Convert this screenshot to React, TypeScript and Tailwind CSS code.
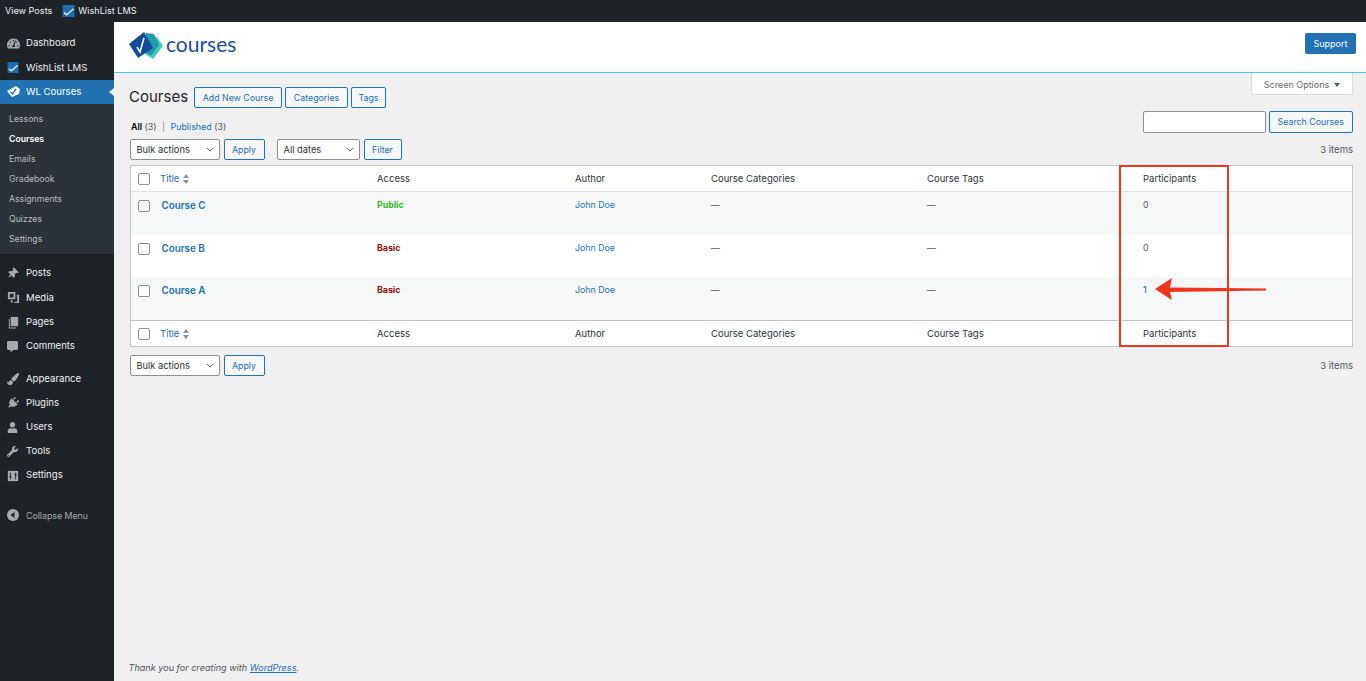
// App.tsx - WL Courses admin list
import type { ReactNode } from 'react';
import { FaTachometerAlt, FaThumbtack, FaCommentAlt, FaPaintBrush, FaPlug, FaUser, FaWrench } from 'react-icons/fa';

const font = 'font-[Inter,"Liberation_Sans",sans-serif]';

function CheckLogo({ className }: { className: string }) {
  return (
    <svg viewBox="0 0 13 13" className={className}>
      <rect width="13" height="13" fill="#1e6cb0" />
      <path d="M1.5 8l3 2.5L12 4" fill="none" stroke="#dfe8f0" strokeWidth="1.6" />
    </svg>
  );
}

function MediaIcon() {
  return (
    <svg viewBox="0 0 14 14" className="w-[13px] h-[13px]" fill="#a7aaad">
      <path d="M1 1h8v8H1z M3 3v4h4V3z" fillRule="evenodd" />
      <path d="M10.5 4H13v9H8v-1.5h3V6h-.5z" />
      <path d="M4 10h2v2.5H4z" />
    </svg>
  );
}

function PagesIcon() {
  return (
    <svg viewBox="0 0 14 14" className="w-[13px] h-[13px]" fill="#a7aaad">
      <path d="M4 1h8v10H4z" />
      <path d="M2 3h1v9.5h7v1H2z" />
    </svg>
  );
}

function SlidersIcon() {
  return (
    <svg viewBox="0 0 14 14" className="w-[12px] h-[12px]">
      <rect x="1" y="1" width="12" height="12" fill="#a7aaad" />
      <path d="M4 3v8M10 3v8M2.5 8h3M8.5 5.5h3" stroke="#1d2327" strokeWidth="1" />
    </svg>
  );
}

function MenuItem({ icon, label, active }: { icon: ReactNode; label: string; active?: boolean }) {
  return (
    <div className={`relative h-[24.2px] flex items-center text-[9.6px] ${active ? 'bg-[#2271b1] text-white' : 'text-[#f0f0f1]'}`}>
      <span className="w-[26px] pl-[7px] flex items-center text-[#a7aaad] shrink-0">{icon}</span>
      {label}
      {active && (
        <span className="absolute right-0 top-[8px] border-y-[4px] border-r-[5px] border-y-transparent border-r-[#f0f0f1]" />
      )}
    </div>
  );
}

function Sidebar() {
  const sub = ['Lessons', 'Courses', 'Emails', 'Gradebook', 'Assignments', 'Quizzes', 'Settings'];
  return (
    <div className="w-[114px] shrink-0 bg-[#1d2327] pt-[9.5px]">
      <MenuItem icon={<FaTachometerAlt className="w-[13px] h-[13px]" />} label="Dashboard" />
      <MenuItem icon={<CheckLogo className="w-[12px] h-[11px]" />} label="WishList LMS" />
      <MenuItem
        active
        label="WL Courses"
        icon={
          <svg viewBox="0 0 14 12" className="w-[14px] h-[12px]">
            <path d="M0 5L9 0l4 3-1 5-7 3z" fill="#fff" />
            <path d="M3.5 6l2 2 3.5-5" fill="none" stroke="#2271b1" strokeWidth="1.4" />
          </svg>
        }
      />
      <div className="bg-[#2c3338] py-[5px] text-[8.7px]">
        {sub.map((s) => (
          <div key={s} className={`h-[20px] flex items-center pl-[9px] ${s === 'Courses' ? 'text-white font-semibold' : 'text-[#b9bcbf]'}`}>
            {s}
          </div>
        ))}
      </div>
      <div className="mt-[7.5px]">
        <MenuItem icon={<FaThumbtack className="w-[11px] h-[11px] rotate-45" />} label="Posts" />
        <MenuItem icon={<MediaIcon />} label="Media" />
        <MenuItem icon={<PagesIcon />} label="Pages" />
        <MenuItem icon={<FaCommentAlt className="w-[11px] h-[11px]" />} label="Comments" />
      </div>
      <div className="mt-[8.5px]">
        <MenuItem icon={<FaPaintBrush className="w-[12px] h-[12px]" />} label="Appearance" />
        <MenuItem icon={<FaPlug className="w-[12px] h-[12px] rotate-45" />} label="Plugins" />
        <MenuItem icon={<FaUser className="w-[11px] h-[11px]" />} label="Users" />
        <MenuItem icon={<FaWrench className="w-[11px] h-[11px]" />} label="Tools" />
        <MenuItem icon={<SlidersIcon />} label="Settings" />
      </div>
      <div className="mt-[15.5px] h-[24px] flex items-center text-[8.8px] text-[#a7aaad]">
        <span className="w-[26px] pl-[7px] shrink-0">
          <svg viewBox="0 0 12 12" className="w-[12px] h-[12px]">
            <circle cx="6" cy="6" r="6" fill="#a7aaad" />
            <path d="M7.5 3v6L3.5 6z" fill="#1d2327" />
          </svg>
        </span>
        Collapse Menu
      </div>
    </div>
  );
}

function OutlineButton({ children, className = '' }: { children: ReactNode; className?: string }) {
  return (
    <button className={`h-[21px] rounded-[2px] border border-[#2271b1] bg-[#f6f7f7] text-[#2271b1] text-[8.8px] flex items-center justify-center ${className}`}>
      {children}
    </button>
  );
}

function FakeSelect({ label, width }: { label: string; width: string }) {
  return (
    <div className={`h-[21px] ${width} rounded-[2px] border border-[#8c8f94] bg-white text-[#2c3338] text-[9.3px] flex items-center justify-between pl-[6px] pr-[5px]`}>
      {label}
      <svg viewBox="0 0 10 6" className="w-[8px] h-[5px]">
        <path d="M1 1l4 4 4-4" fill="none" stroke="#50575e" strokeWidth="1.2" />
      </svg>
    </div>
  );
}

const gridCols = 'grid grid-cols-[22.5px_217px_198px_136px_216px_216px_1fr]';

function Checkbox() {
  return <span className="block w-[12px] h-[12px] ml-[7.5px] rounded-[2px] border border-[#8c8f94] bg-white" />;
}

function HeaderRow({ className }: { className: string }) {
  const heads = ['Access', 'Author', 'Course Categories', 'Course Tags', 'Participants'];
  return (
    <div className={`${gridCols} h-[26px] items-center bg-white text-[9.5px] text-[#2c3338] ${className}`}>
      <Checkbox />
      <div className="pl-[7px] pt-[1px] flex items-center gap-[4px] text-[#2271b1]">
        Title
        <svg viewBox="0 0 6 10" className="w-[6px] h-[10px]" fill="#8c8f94">
          <path d="M3 0l3 4H0zM3 10L0 6h6z" />
        </svg>
      </div>
      {heads.map((h) => (
        <div key={h} className="pl-[7px] pt-[1px]">{h}</div>
      ))}
    </div>
  );
}

type Course = { name: string; access: string; accessColor: string; count: string; link?: boolean; alt: boolean };

const courses: Course[] = [
  { name: 'Course C', access: 'Public', accessColor: 'text-[#2fbb1f]', count: '0', alt: true },
  { name: 'Course B', access: 'Basic', accessColor: 'text-[#8a1010]', count: '0', alt: false },
  { name: 'Course A', access: 'Basic', accessColor: 'text-[#8a1010]', count: '1', link: true, alt: true },
];

function CourseRow({ c }: { c: Course }) {
  return (
    <div className={`${gridCols} h-[42.7px] pt-[8px] text-[8.8px] text-[#50575e] ${c.alt ? 'bg-[#f6f7f7]' : 'bg-white'}`}>
      <Checkbox />
      <div className="pl-[8.5px] text-[9.8px] font-semibold text-[#2271b1] leading-[12px]">{c.name}</div>
      <div className={`pl-[7px] font-bold leading-[10px] ${c.accessColor}`}>{c.access}</div>
      <div className="pl-[7px] text-[#2271b1] leading-[10px]">John Doe</div>
      <div className="pl-[7px] leading-[10px]">—</div>
      <div className="pl-[7px] leading-[10px]">—</div>
      <div className={`pl-[7px] leading-[10px] ${c.link ? 'text-[#2271b1] font-medium' : ''}`}>{c.count}</div>
    </div>
  );
}

function App() {
  return (
    <div className={`${font} h-[681px] overflow-hidden flex flex-col bg-[#f0f0f1]`}>
      {/* top bar */}
      <div className="h-[22px] shrink-0 bg-[#1d2327] flex items-center pl-[5px] text-[9.1px] text-[#f0f0f1]">
        <span>View Posts</span>
        <CheckLogo className="w-[13px] h-[12px] ml-[9.5px] mr-[3.5px]" />
        <span>WishList LMS</span>
      </div>

      <div className="flex flex-1 min-h-0">
        <Sidebar />

        <div className="relative flex-1 flex flex-col">
          {/* plugin header */}
          <div className="h-[51px] shrink-0 bg-white border-b-[1.5px] border-[#4fc6de] flex items-start justify-between pt-[10px] pl-[15px] pr-[10px]">
            <div className="flex items-start gap-[3px]">
              <svg viewBox="0 0 34 28" className="w-[34px] h-[28px]">
                <path d="M19 3l9 2 6 9-10 13-8-5z" fill="#43cdb8" />
                <path d="M17 1l8 1 5 11-8 11-6-4z" fill="#1f9aa8" />
                <path d="M0 12L15 0l9 16-15 10z" fill="#124a9c" />
                <path d="M8 15l3 5 4-14" fill="none" stroke="#fff" strokeWidth="1.6" />
              </svg>
              <span className="text-[21px] leading-[24px] text-[#1c4c9c] font-[Lato,sans-serif]">courses</span>
            </div>
            <div className="mt-[1px] w-[51px] h-[21px] rounded-[2px] bg-[#2271b1] text-white text-[9px] flex items-center justify-center">Support</div>
          </div>

          {/* screen options tab */}
          <div className="absolute top-[51px] right-[13px] w-[102px] h-[22px] pt-[2px] bg-white border border-t-0 border-[#dcdcde] rounded-b-[3px] text-[#646970] text-[9px] flex items-center justify-center gap-[5px]">
            Screen Options
            <span className="border-x-[3px] border-t-[4px] border-x-transparent border-t-[#50575e]" />
          </div>

          <div className="flex-1 flex flex-col pl-[15.5px] pr-[13px] pt-[14px] pb-[6px]">
            <div className="flex items-center h-[21px]">
              <h1 className="w-[64.5px] -ml-[0.5px] text-[15px] text-[#1d2327]">Courses</h1>
              <div className="flex gap-[3px] ml-[0.5px]">
                <OutlineButton className="w-[88px]">Add New Course</OutlineButton>
                <OutlineButton className="w-[63px]">Categories</OutlineButton>
                <OutlineButton className="w-[35px]">Tags</OutlineButton>
              </div>
            </div>

            <div className="mt-[3px] h-[22px] flex items-end justify-between">
              <div className="pl-[1.5px] text-[8.9px] text-[#50575e] leading-[12px]">
                <span className="font-semibold text-black">All</span> (3) <span className="text-[#8c8f94] mx-[3px]">|</span>{' '}
                <span className="text-[#2271b1]">Published</span> (3)
              </div>
              <div className="flex gap-[2.5px]">
                <div className="w-[123px] h-[22px] rounded-[2px] border border-[#8c8f94] bg-white" />
                <OutlineButton className="w-[84.5px] !h-[22px]">Search Courses</OutlineButton>
              </div>
            </div>

            <div className="mt-[6px] h-[21px] flex items-center">
              <FakeSelect label="Bulk actions" width="w-[90px]" />
              <OutlineButton className="w-[41px] ml-[4px]">Apply</OutlineButton>
              <FakeSelect label="All dates" width="w-[83px] ml-[12px]" />
              <OutlineButton className="w-[38px] ml-[4px]">Filter</OutlineButton>
              <span className="ml-auto pt-[1px] text-[9.5px] text-[#50575e]">3 items</span>
            </div>

            {/* table */}
            <div className="relative mt-[5px] border border-[#c3c4c7] bg-white">
              <HeaderRow className="border-b border-[#e4e4e6]" />
              {courses.map((c) => (
                <CourseRow key={c.name} c={c} />
              ))}
              <HeaderRow className="border-t border-[#c3c4c7]" />

              {/* red annotation */}
              <div className="absolute left-[988px] -top-[1px] w-[110px] h-[182px] border-2 border-[#f0351e]" />
              <svg viewBox="0 0 112 22" className="absolute left-[1024px] top-[112px] w-[112px] h-[22px]">
                <path d="M0 11L17 0l-2 9.5L111 10.5v2L15 14l2 8z" fill="#f0351e" />
              </svg>
            </div>

            <div className="mt-[8px] h-[21px] flex items-center">
              <FakeSelect label="Bulk actions" width="w-[90px]" />
              <OutlineButton className="w-[41px] ml-[4px]">Apply</OutlineButton>
              <span className="ml-auto pt-[1px] text-[9.5px] text-[#50575e]">3 items</span>
            </div>

            <p className="mt-auto -ml-[1px] text-[9.1px] italic text-[#50575e]">
              Thank you for creating with <span className="underline text-[#2271b1]">WordPress</span>.
            </p>
          </div>
        </div>
      </div>
    </div>
  );
}

export default App;
